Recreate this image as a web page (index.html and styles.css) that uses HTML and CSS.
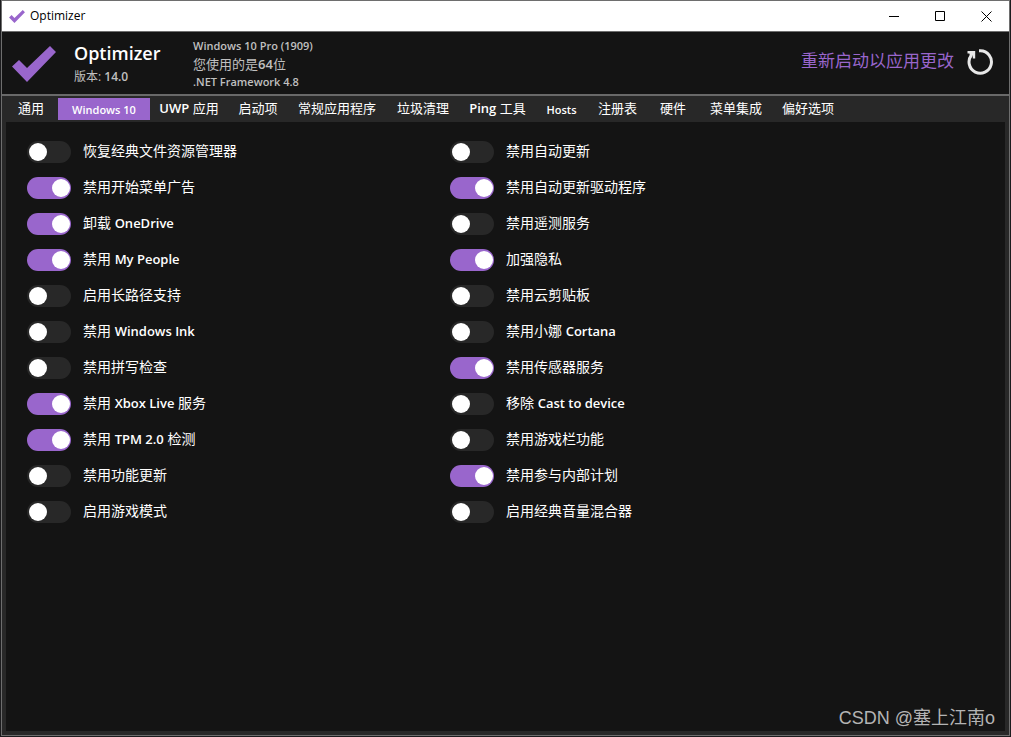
FILE: index.html
```html
<!DOCTYPE html>
<html lang="zh-CN">
<head>
<meta charset="utf-8">
<title>Optimizer</title>
<link rel="stylesheet" href="styles.css">
</head>
<body>
<div class="window">
  <div class="titlebar">
    <svg class="title-icon" viewBox="0 0 44 36" aria-hidden="true"><path d="M0 20.5 L7 14 L15 22 L38 0 L44 6 L15 36 Z"/></svg>
    <span class="title-text">Optimizer</span>
    <div class="window-buttons">
      <button type="button" aria-label="最小化"><svg viewBox="0 0 11 11"><path d="M0 5.5H10"/></svg></button>
      <button type="button" aria-label="最大化"><svg viewBox="0 0 11 11"><path d="M.5 .5H9.5V9.5H.5Z"/></svg></button>
      <button type="button" aria-label="关闭"><svg viewBox="0 0 11 11"><path d="M.5 .5L10.5 10.5M10.5 .5L.5 10.5"/></svg></button>
    </div>
  </div>
  <header class="header">
    <svg class="logo" viewBox="0 0 44 36" aria-hidden="true"><path d="M0 20.5 L7 14 L15 22 L38 0 L44 6 L15 36 Z"/></svg>
    <div class="product">
      <h1>Optimizer</h1>
      <p>版本: <b>14.0</b></p>
    </div>
    <div class="system">
      <p><b>Windows 10 Pro (1909)</b></p>
      <p class="bits">您使用的是<b>64</b>位</p>
      <p><b>.NET Framework 4.8</b></p>
    </div>
    <a class="restart-link" href="#">重新启动以应用更改</a>
    <button class="restart" type="button" aria-label="重新启动">
      <svg viewBox="0 0 26 26"><path class="ring" d="M12 1.8H13.5A11.2 11.2 0 1 1 4.5 6"/><path class="arrow" d="M0.5 2H8.2V9.6H5.8V6.6L3.2 8L2.4 4.6H0.5Z"/></svg>
    </button>
  </header>
  <nav class="tabs">
    <button type="button">通用</button>
    <button type="button" class="active"><b>Windows 10</b></button>
    <button type="button"><b>UWP</b> 应用</button>
    <button type="button">启动项</button>
    <button type="button">常规应用程序</button>
    <button type="button">垃圾清理</button>
    <button type="button"><b>Ping</b> 工具</button>
    <button type="button" class="latin"><b>Hosts</b></button>
    <button type="button">注册表</button>
    <button type="button">硬件</button>
    <button type="button">菜单集成</button>
    <button type="button">偏好选项</button>
  </nav>
  <main class="page">
    <div class="options">
      <label><input type="checkbox" role="switch"><span>恢复经典文件资源管理器</span></label>
      <label><input type="checkbox" role="switch" checked><span>禁用开始菜单广告</span></label>
      <label><input type="checkbox" role="switch" checked><span>卸载 <b>OneDrive</b></span></label>
      <label><input type="checkbox" role="switch" checked><span>禁用 <b>My People</b></span></label>
      <label><input type="checkbox" role="switch"><span>启用长路径支持</span></label>
      <label><input type="checkbox" role="switch"><span>禁用 <b>Windows Ink</b></span></label>
      <label><input type="checkbox" role="switch"><span>禁用拼写检查</span></label>
      <label><input type="checkbox" role="switch" checked><span>禁用 <b>Xbox Live</b> 服务</span></label>
      <label><input type="checkbox" role="switch" checked><span>禁用 <b>TPM 2.0</b> 检测</span></label>
      <label><input type="checkbox" role="switch"><span>禁用功能更新</span></label>
      <label><input type="checkbox" role="switch"><span>启用游戏模式</span></label>
    </div>
    <div class="options">
      <label><input type="checkbox" role="switch"><span>禁用自动更新</span></label>
      <label><input type="checkbox" role="switch" checked><span>禁用自动更新驱动程序</span></label>
      <label><input type="checkbox" role="switch"><span>禁用遥测服务</span></label>
      <label><input type="checkbox" role="switch" checked><span>加强隐私</span></label>
      <label><input type="checkbox" role="switch"><span>禁用云剪贴板</span></label>
      <label><input type="checkbox" role="switch"><span>禁用小娜 <b>Cortana</b></span></label>
      <label><input type="checkbox" role="switch" checked><span>禁用传感器服务</span></label>
      <label><input type="checkbox" role="switch"><span>移除 <b>Cast to device</b></span></label>
      <label><input type="checkbox" role="switch"><span>禁用游戏栏功能</span></label>
      <label><input type="checkbox" role="switch" checked><span>禁用参与内部计划</span></label>
      <label><input type="checkbox" role="switch"><span>启用经典音量混合器</span></label>
    </div>
    <div class="watermark">CSDN @塞上江南o</div>
  </main>
</div>
</body>
</html>
```
FILE: styles.css
```css
* { box-sizing: border-box; }
body {
  margin: 0;
  height: 100vh;
  padding: 0 1px 1px;
  background: #1c1c1e;
  color: #fff;
  font: 14px/18px "Open Sans", "Noto Sans CJK SC", sans-serif;
}
b { font-weight: 600; }
p, h1 { margin: 0; }
button { border: 0; padding: 0; background: none; color: inherit; font: inherit; }
.window {
  display: flex;
  flex-direction: column;
  min-height: 100%;
  border: 1px solid #6e6e6e;
  background: #282828;
}
.titlebar {
  display: flex;
  align-items: center;
  height: 31px;
  padding-left: 7px;
  background: #fff;
  color: #000;
  font-size: 12px;
  border-bottom: 1px solid #6e6e6e;
}
.title-icon { width: 16px; height: 13px; margin-right: 5px; fill: #9966cc; }
.title-text { font-size: 12px; }
.window-buttons { display: flex; margin-left: auto; }
.window-buttons button { display: grid; place-items: center; width: 46px; height: 29px; }
.window-buttons svg { width: 11px; height: 11px; fill: none; stroke: #000; stroke-width: 1; }
.header {
  display: flex;
  align-items: center;
  height: 64px;
  padding: 2px 16px 0 10px;
  background: #141414;
  border-bottom: 2px solid #696969;
}
.logo { width: 44px; height: 36px; margin-right: 18px; fill: #9966cc; }
.product { width: 119px; color: #c0c0c0; font-size: 12px; }
.product h1 { color: #fff; font-size: 18px; line-height: 26px; font-weight: 600; }
.product p { line-height: 22px; }
.system { color: #c0c0c0; font-size: 11px; }
.bits { font-size: 13px; }
.restart-link { margin-left: auto; padding-bottom: 6px; color: #9966cc; font-size: 17px; line-height: 24px; text-decoration: none; }
.restart { margin-left: 13px; padding-bottom: 4px; }
.restart svg { display: block; width: 26px; height: 26px; }
.ring { fill: none; stroke: #e8e8e8; stroke-width: 3; }
.arrow { fill: #e8e8e8; }
.tabs {
  display: grid;
  grid-template-columns: 54px 92px 78px 60px 98px 74px 75px 53px 59px 52px 74px 70px;
  height: 26px;
  padding-left: 2px;
  font-size: 13px;
}
.tabs button { height: 22px; margin-top: 2px; padding-bottom: 2px; line-height: 20px; white-space: nowrap; }
.tabs .active, .tabs .latin { padding: 2px 0 0; }
.tabs .active { background: #9966cc; font-size: 11px; }
.tabs .latin { font-size: 11px; }
.page {
  position: relative;
  flex: 1;
  display: grid;
  grid-template-columns: 423px 1fr;
  align-content: start;
  margin: 0 4px 4px;
  padding: 12px 21px;
  background: #141414;
}
.options label { display: flex; align-items: center; height: 36px; gap: 12px; }
.options span { margin-bottom: 2px; font-size: 14px; }
.options b { font-size: 13px; }
.options input {
  appearance: none;
  flex: none;
  display: flex;
  align-items: center;
  width: 44px;
  height: 22px;
  margin: 0;
  padding: 0 1px 0 2px;
  border-radius: 11px;
  background: #282828;
}
.options input::before { content: ""; width: 18px; height: 18px; border-radius: 50%; background: #fff; }
.options input:checked { justify-content: flex-end; background: #9966cc; }
.watermark {
  position: absolute;
  right: 10px;
  bottom: 0;
  color: #b4b4b4;
  font: 18px/26px "Liberation Sans", "Noto Sans CJK SC", sans-serif;
}
```
